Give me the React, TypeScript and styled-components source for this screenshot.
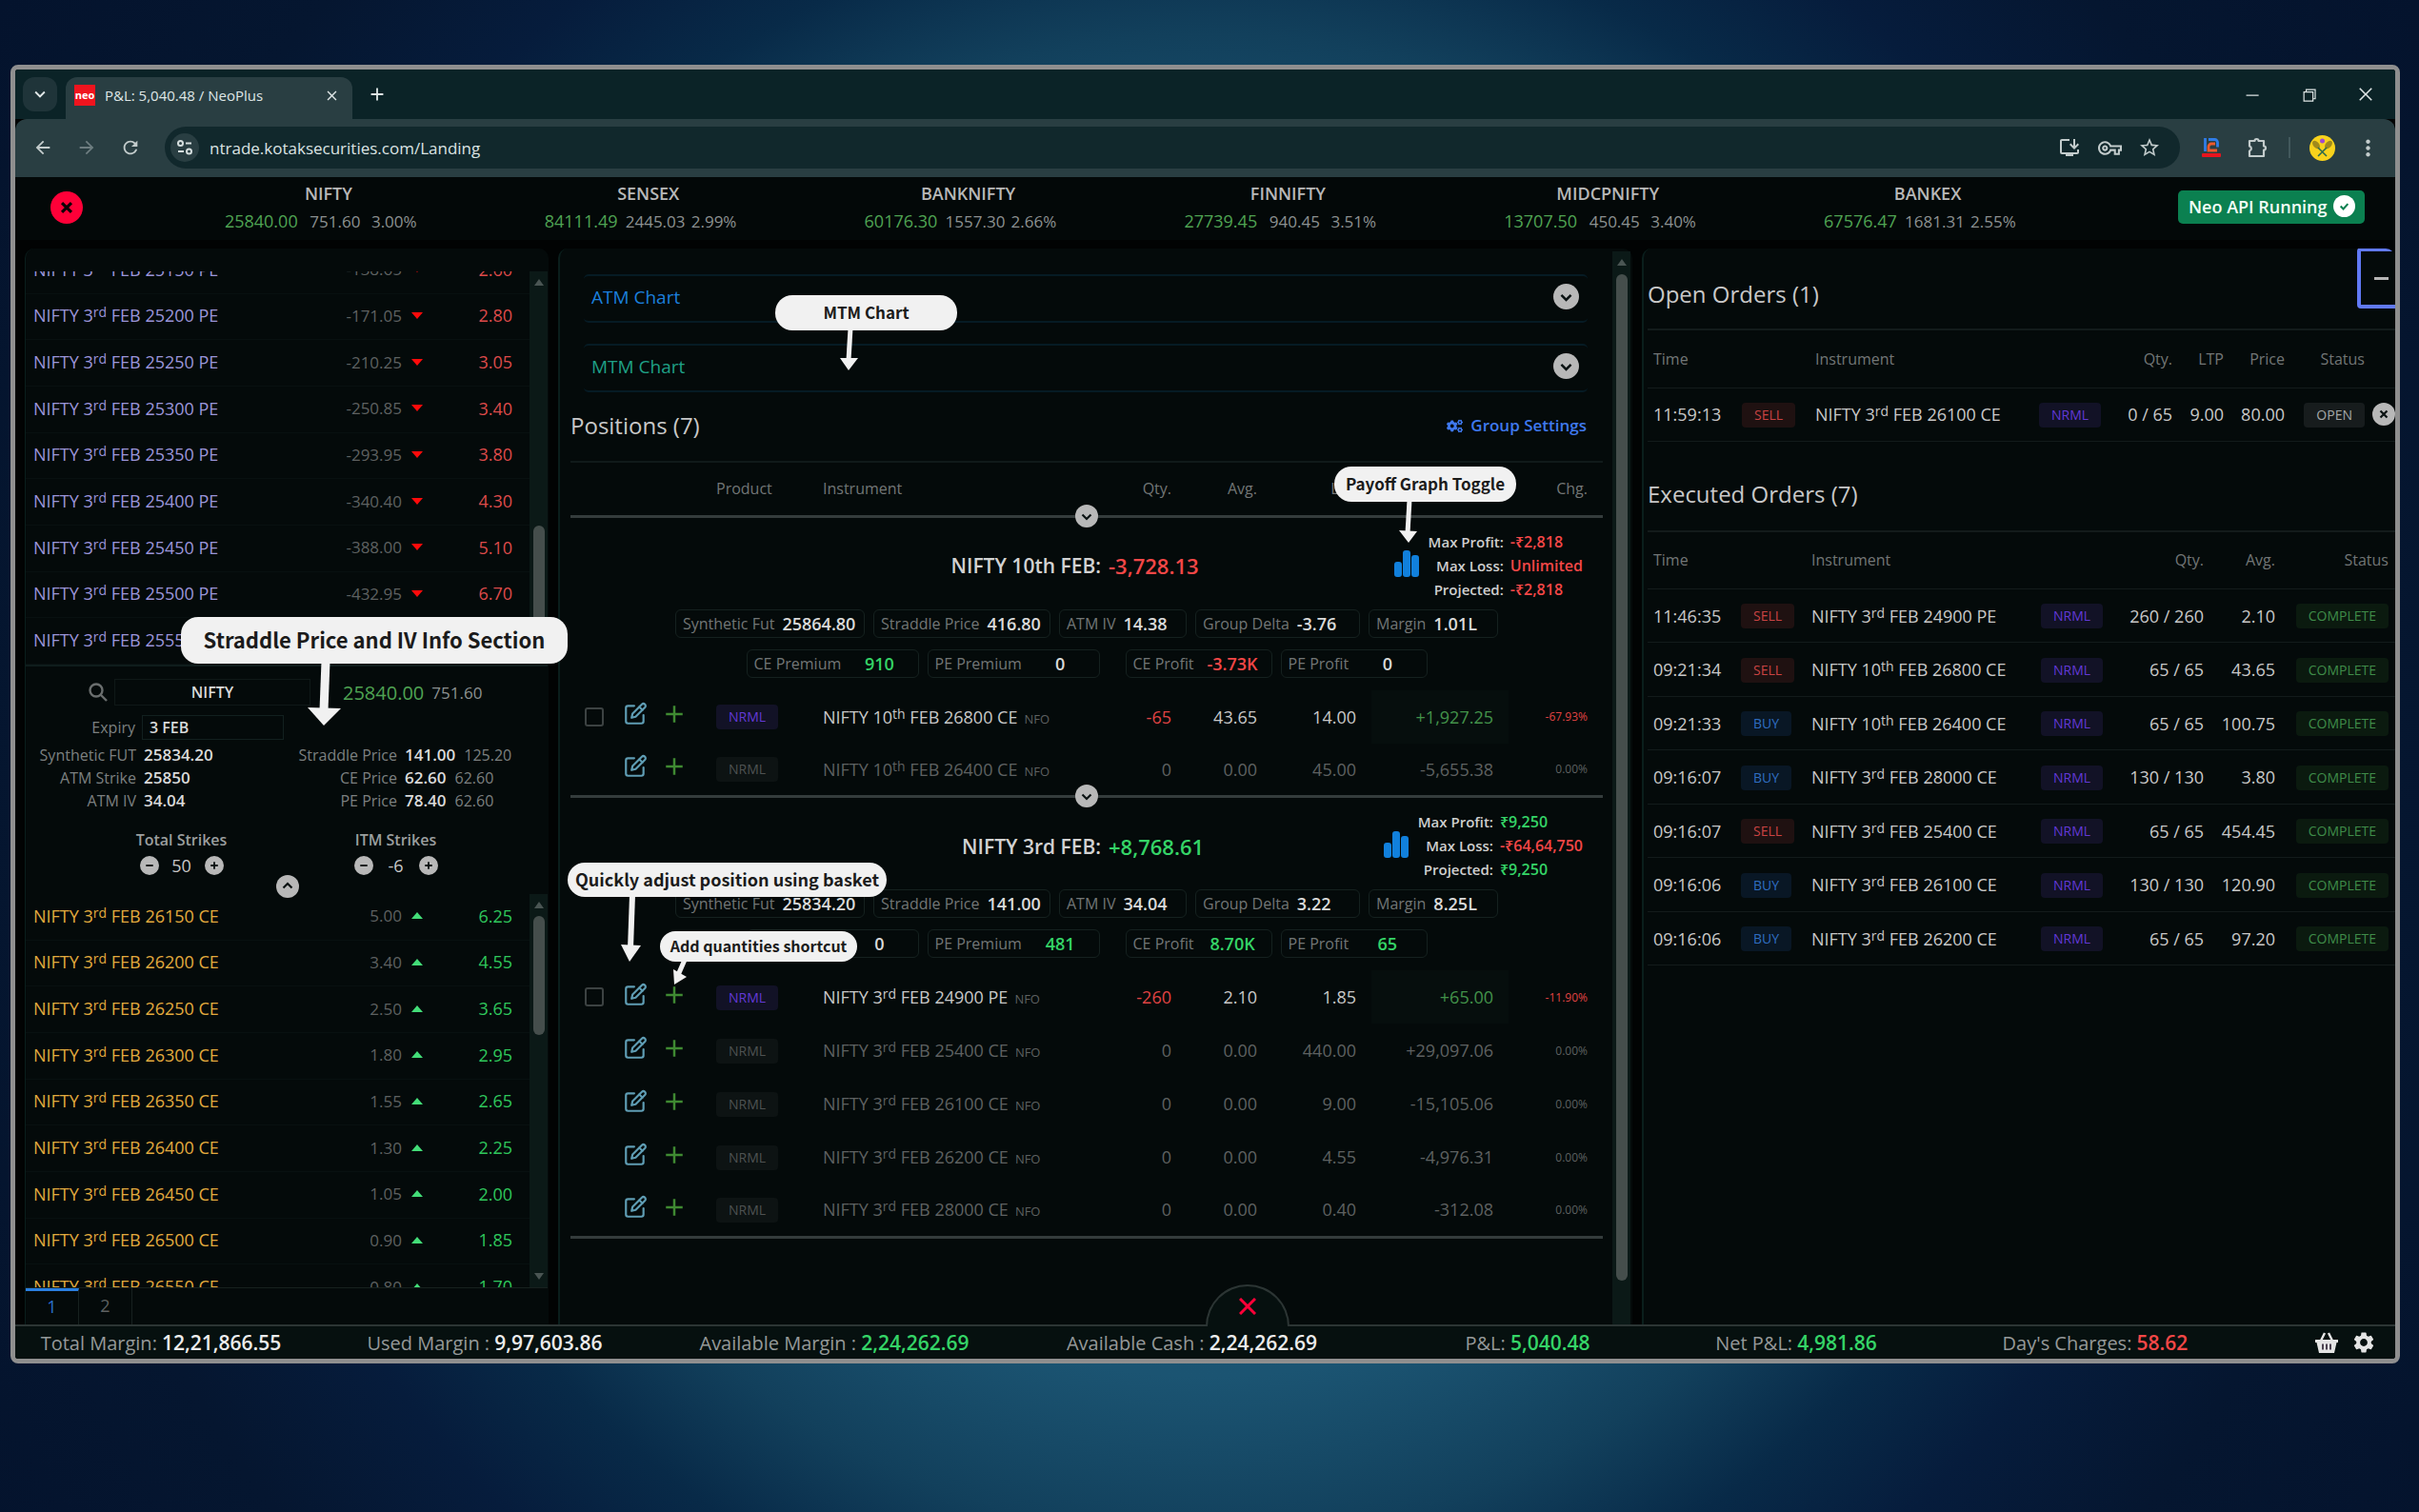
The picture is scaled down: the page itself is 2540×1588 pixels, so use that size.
import React from "react";
import styled, { createGlobalStyle } from "styled-components";
import {
  MdArrowBack,
  MdArrowForward,
  MdRefresh,
  MdInstallDesktop,
  MdOutlineVpnKey,
  MdStarOutline,
  MdMoreVert,
  MdClose,
  MdAdd,
  MdKeyboardArrowDown,
  MdSettings,
} from "react-icons/md";
import { VscChromeClose, VscChromeMinimize, VscChromeRestore } from "react-icons/vsc";
import { FaCogs } from "react-icons/fa";

const c = {
  panel: "#040a0a",
  line: "#101a1a",
  rule: "#343c3c",
  text: "#c8c8c8",
  bright: "#dadada",
  label: "#727676",
  dim: "#5e6161",
  green: "#35d467",
  mutedGreen: "#4fa353",
  red: "#f44747",
  chip: "#15211f",
};

const Global = createGlobalStyle`
  * { box-sizing: border-box; }
  body { margin: 0; background: #04132d; }
  body, button, input, select { font-family: "Open Sans", "Noto Sans", sans-serif; }
  button { border: 0; padding: 0; background: none; color: inherit; cursor: pointer; }
  h1, h2, h3 { margin: 0; font-weight: 400; }
  sup { font-size: 14px; line-height: 0; vertical-align: 5px; }
`;

const Desktop = styled.div`
  position: relative;
  display: flex;
  min-height: 100vh;
  padding: 68px 20px 156px 11px;
  background: radial-gradient(circle at 50% 52%, #20607f 0, #1b5472 620px, #12405c 790px, #082a48 920px, #061c3c 1060px, #051630 1240px, #04132d 100%);
`;

const Window = styled.main`
  flex: 1;
  min-width: 0;
  display: flex;
  flex-direction: column;
  overflow: hidden;
  border: 5px solid #8f8f8f;
  border-radius: 8px;
  background: #010303;
`;

/* browser chrome */

const TabStrip = styled.div`
  display: flex;
  align-items: flex-start;
  height: 52px;
  padding: 8px 8px 0;
  background: #0b2327;
  color: #dfe6e6;
`;

const TabSearch = styled.button`
  display: grid;
  place-items: center;
  width: 36px;
  height: 36px;
  border-radius: 12px;
  background: #1f3439;
  font-size: 22px;
`;

const Tab = styled.div`
  display: flex;
  align-items: center;
  width: 301px;
  height: 44px;
  margin-left: 9px;
  padding: 0 12px 6px 9px;
  border-radius: 12px 12px 0 0;
  background: #293e42;
`;

const Favicon = styled.span`
  width: 22px;
  height: 22px;
  background: #f0141e;
  color: #fff;
  font-size: 11px;
  font-weight: 700;
  line-height: 22px;
  text-align: center;
`;

const TabTitle = styled.span`
  flex: 1;
  margin-left: 10px;
  font-size: 15px;
`;

const IconButton = styled.button<{ $size?: number }>`
  display: grid;
  place-items: center;
  width: 36px;
  height: 36px;
  font-size: ${(p) => p.$size ?? 22}px;
`;

const TabClose = styled(IconButton)`
  width: 20px;
`;

const NewTab = styled(IconButton)`
  margin-left: 8px;
`;

const WindowControls = styled.div`
  display: flex;
  gap: 24px;
  margin-left: auto;
  padding-right: 5px;
`;

const Toolbar = styled.div`
  display: flex;
  align-items: center;
  height: 61px;
  padding: 0 11px 1px;
  border-radius: 12px 12px 0 0;
  background: #293e42;
  color: #c3cccc;
`;

const NavButtons = styled.div`
  display: flex;
  gap: 10px;
  width: 146px;
`;

const Omnibox = styled.div`
  flex: 1;
  display: flex;
  align-items: center;
  height: 44px;
  padding: 0 14px 0 6px;
  border-radius: 22px;
  background: #11282c;
`;

const SiteInfo = styled.button`
  display: grid;
  place-items: center;
  width: 30px;
  height: 30px;
  border-radius: 50%;
  background: #293e42;
`;

const Url = styled.input`
  flex: 1;
  margin-left: 9px;
  border: 0;
  outline: 0;
  background: none;
  color: #dbe3e3;
  font-size: 17px;
`;

const OmniIcons = styled.div`
  display: flex;
  gap: 6px;
`;

const Extensions = styled.div`
  display: flex;
  align-items: center;
  padding-left: 15px;
  gap: 12px;
`;

const Divider = styled.span`
  width: 2px;
  height: 22px;
  margin: 0 3px;
  background: #42585c;
`;

/* ticker */

const Ticker = styled.header`
  display: flex;
  align-items: center;
  height: 66px;
  padding-bottom: 3px;
  background: #030808;
`;

const TickerStart = styled.div`
  width: 161px;
  padding-left: 37px;
`;

const CloseAll = styled.button`
  display: block;
`;

const Indices = styled.div`
  flex: 1;
  display: grid;
  grid-template-columns: repeat(6, 1fr);
  padding-bottom: 3px;
`;

const Index = styled.div`
  display: flex;
  flex-direction: column;
  align-items: center;
`;

const IndexName = styled.span`
  color: #b8b8b8;
  font-size: 18px;
  font-weight: 600;
  line-height: 32px;
`;

const IndexFigures = styled.div`
  display: grid;
  grid-template-columns: 78px 62px 64px;
  column-gap: 7px;
  align-items: baseline;
  color: #8c9191;
  font-size: 17px;
  line-height: 27px;
  span:nth-child(2) { text-align: center; }
`;

const IndexPrice = styled.b`
  color: ${c.mutedGreen};
  font-size: 18px;
  font-weight: 400;
`;

const TickerEnd = styled.div`
  width: 323px;
  padding-left: 95px;
`;

const ApiButton = styled.button`
  display: flex;
  align-items: center;
  justify-content: space-between;
  width: 196px;
  height: 35px;
  padding: 0 10px 2px 11px;
  border-radius: 5px;
  background: #0b8050;
  color: #f4fff8;
  font-size: 18px;
  font-weight: 600;
`;

/* layout */

const Body = styled.div`
  flex: 1;
  display: grid;
  grid-template-columns: minmax(0, 550fr) minmax(0, 1128fr) minmax(0, 791fr);
  grid-template-rows: minmax(0, 1fr);
  column-gap: 10px;
  padding: 9px 0 0 10px;
  min-height: 0;
`;

const Panel = styled.section`
  position: relative;
  display: flex;
  min-width: 0;
  border-left: 2px solid #0a1e1c;
  border-radius: 10px 10px 0 0;
  background: ${c.panel};
`;

const LeftPanel = styled(Panel)`
  flex-direction: column;
  border-left-width: 1px;
  padding: 24px 1px 0 0;
`;

const Watch = styled.div`
  flex: 1 1 0;
  display: flex;
  min-height: 0;
  overflow: hidden;
`;

const WatchRows = styled.div<{ $end?: boolean }>`
  flex: 1;
  display: flex;
  flex-direction: column;
  justify-content: ${(p) => (p.$end ? "flex-end" : "flex-start")};
  overflow: hidden;
`;

const WatchGrid = styled.div`
  flex: none;
  display: grid;
  grid-template-rows: repeat(9, 1fr);
  height: 438px;
`;

const WatchRow = styled.div<{ $call?: boolean }>`
  display: grid;
  grid-template-columns: 1fr 100px 32px 84px;
  align-items: center;
  padding: 0 18px 2px 8px;
  border-bottom: 1px solid #081010;
  color: ${(p) => (p.$call ? "#e2aa3e" : "#9b95da")};
  font-size: 18px;
`;

const Change = styled.span`
  color: ${c.dim};
  font-size: 17px;
  text-align: right;
`;

const Caret = styled.i<{ $up?: boolean }>`
  justify-self: center;
  border: 6px solid transparent;
  border-${(p) => (p.$up ? "bottom" : "top")}: 7px solid ${(p) => (p.$up ? "#43dd78" : "#ff0a0a")};
  border-${(p) => (p.$up ? "top" : "bottom")}: 0;
`;

const Last = styled.span<{ $up?: boolean }>`
  color: ${(p) => (p.$up ? "#2fc75c" : "#dd4a4a")};
  text-align: right;
`;

const Track = styled.div`
  display: flex;
  flex-direction: column;
  align-items: center;
  width: 19px;
  padding: 8px 0;
  background: #0b1917;
`;

const TrackArrow = styled.i<{ $down?: boolean }>`
  border: 5px solid transparent;
  border-${(p) => (p.$down ? "top" : "bottom")}: 7px solid #4a5553;
  border-${(p) => (p.$down ? "bottom" : "top")}: 0;
`;

const Thumb = styled.div<{ $before: number; $size: number }>`
  flex: ${(p) => p.$size} 1 0;
  width: 12px;
  margin-top: ${(p) => p.$before}px;
  border-radius: 6px;
  background: #454e4c;
`;

const TrackRest = styled.div<{ $size: number }>`
  flex: ${(p) => p.$size} 1 0;
`;

const Info = styled.div`
  position: relative;
  height: 241px;
  padding-top: 12px;
  border-top: 2px solid #0f1d1c;
  color: #7c8080;
  font-size: 16px;
`;

const InfoSearch = styled.div`
  display: flex;
  align-items: center;
  height: 30px;
  padding-left: 66px;
`;

const Symbol = styled.input`
  width: 206px;
  height: 28px;
  margin: 0 34px 0 7px;
  border: 1px solid #0f1817;
  background: transparent;
  color: ${c.bright};
  font-size: 16px;
  font-weight: 600;
  text-align: center;
`;

const Spot = styled.span`
  color: ${c.mutedGreen};
  font-size: 20px;
`;

const SpotChange = styled.span`
  margin-left: 8px;
  color: #8c9191;
  font-size: 17px;
`;

const InfoExpiry = styled.label`
  display: flex;
  align-items: center;
  justify-content: flex-end;
  width: 271px;
  height: 26px;
  margin: 9px 0 4px;
  gap: 7px;
`;

const Expiry = styled.select`
  appearance: none;
  width: 149px;
  height: 26px;
  padding: 0 7px;
  border: 1px solid #12201f;
  border-radius: 0;
  background: transparent;
  color: ${c.bright};
  font-size: 16px;
  font-weight: 600;
`;

const InfoGrid = styled.div`
  display: grid;
  grid-template-columns: 116px 148px 110px 1fr;
  column-gap: 8px;
  line-height: 24px;
  span:nth-child(odd) { text-align: right; }
  b { margin-right: 9px; color: ${c.bright}; font-size: 17px; font-weight: 600; }
`;

const Steppers = styled.div`
  display: grid;
  grid-template-columns: 225px 225px;
  margin: 15px 0 0 51px;
`;

const Stepper = styled.div`
  display: flex;
  flex-direction: column;
  align-items: center;
  color: #9b9f9f;
  font-weight: 600;
  line-height: 28px;
`;

const StepRow = styled.div`
  display: grid;
  grid-template-columns: 20px 48px 20px;
  align-items: center;
  color: ${c.text};
  font-size: 18px;
  font-weight: 400;
  line-height: 26px;
  text-align: center;
`;

const InfoToggle = styled.button`
  position: absolute;
  left: 263px;
  top: 219px;
`;

const RoundSvg = styled.svg`
  display: block;
`;

const Pages = styled.nav`
  display: flex;
  height: 39px;
  border-top: 1px solid #17211f;
`;

const PageTab = styled.button<{ $on?: boolean }>`
  width: 56px;
  padding-bottom: 3px;
  border-top: ${(p) => (p.$on ? "3px solid #2a7fe0" : "0")};
  border-right: 1px solid #17211f;
  color: ${(p) => (p.$on ? "#2a6fd0" : c.dim)};
  font-size: 18px;
`;

/* positions */

const Center = styled.div`
  flex: 1;
  min-width: 0;
  padding: 27px 10px 0 11px;
`;

const Accordion = styled.button<{ $tone: string }>`
  display: flex;
  align-items: center;
  justify-content: space-between;
  width: calc(100% - 30px);
  height: 51px;
  margin: 0 16px 22px 14px;
  padding: 0 9px 4px 8px;
  border: solid #061b24;
  border-width: 2px 0;
  border-radius: 5px;
  color: ${(p) => p.$tone};
  font-size: 19px;
`;

const TitleBar = styled.div`
  display: flex;
  align-items: center;
  justify-content: space-between;
  height: 50px;
  padding: 0 17px 24px 0;
`;

const Title = styled.h2`
  color: ${c.text};
  font-size: 24px;
  line-height: 24px;
`;

const SettingsLink = styled.a`
  display: flex;
  align-items: center;
  gap: 8px;
  color: #3f79ee;
  font-size: 17px;
  font-weight: 600;
  line-height: 20px;
  text-decoration: none;
`;

const Table = styled.table`
  width: 100%;
  border-collapse: collapse;
  table-layout: fixed;
  color: ${c.text};
  font-size: 18px;
`;

const Th = styled.th<{ $right?: boolean; $pad?: number }>`
  height: 57px;
  padding: 0 16px 0 ${(p) => p.$pad ?? 0}px;
  border-top: 2px solid ${c.line};
  color: ${c.label};
  font-size: 16px;
  font-weight: 400;
  text-align: ${(p) => (p.$right ? "right" : "left")};
`;

const Td = styled.td<{ $right?: boolean; $pad?: number; $tone?: string; $hl?: boolean }>`
  height: 56px;
  padding: 0 ${(p) => (p.$right ? 16 : 0)}px 0 ${(p) => p.$pad ?? 0}px;
  background: ${(p) => (p.$hl ? "#060e0d" : "transparent")};
  color: ${(p) => p.$tone ?? "inherit"};
  text-align: ${(p) => (p.$right ? "right" : "left")};
  white-space: nowrap;
`;

const PctTd = styled(Td)`
  font-size: 12px;
`;

const IconTd = styled.td`
  padding: 0;
  text-align: center;
  svg { display: block; margin: auto; }
`;

const Check = styled.input`
  appearance: none;
  display: block;
  width: 20px;
  height: 20px;
  margin: 0 auto;
  border: 2px solid #3c4242;
  border-radius: 3px;
`;

const Exchange = styled.small`
  margin-left: 7px;
  color: ${c.dim};
  font-size: 13px;
`;

const tones: Record<string, [string, string]> = {
  NRML: ["#121226", "#6239d6"],
  OFF: ["#0d1313", "#4e5252"],
  SELL: ["#1f1111", "#c94343"],
  BUY: ["#091725", "#2f6ec2"],
  OPEN: ["#171c1d", "#a5a9a9"],
  COMPLETE: ["#0b1a0f", "#3f8c49"],
};

const Badge = styled.span<{ $tone: string }>`
  display: inline-block;
  padding: 0 13px;
  border-radius: 4px;
  background: ${(p) => tones[p.$tone][0]};
  color: ${(p) => tones[p.$tone][1]};
  font-size: 14px;
  line-height: 26px;
  vertical-align: middle;
`;

const GroupCell = styled.td`
  padding: 0;
  border-top: 3px solid ${c.rule};
`;

const Group = styled.div`
  position: relative;
  height: 181px;
`;

const GroupToggle = styled.button`
  position: absolute;
  left: 50%;
  top: -14px;
  margin-left: -12px;
`;

const GroupHead = styled.div`
  display: grid;
  grid-template-columns: 557fr 519fr;
  column-gap: 8px;
  align-items: center;
  height: 96px;
  padding-top: 5px;
  font-size: 22px;
  font-weight: 600;
`;

const GroupName = styled.h3`
  color: #d2d2d2;
  font-size: 21px;
  font-weight: 600;
  text-align: right;
`;

const GroupSide = styled.div<{ $tone: string }>`
  display: flex;
  align-items: center;
  justify-content: space-between;
  padding-right: 21px;
  color: ${(p) => p.$tone};
`;

const Payoff = styled.div`
  display: flex;
  align-items: center;
  gap: 10px;
`;

const Stats = styled.dl`
  display: grid;
  grid-template-columns: auto auto;
  column-gap: 7px;
  margin: 0;
  color: #cfcfcf;
  font-size: 16px;
  font-weight: 600;
  line-height: 25px;
  dt { font-size: 15px; text-align: right; }
  dd { margin: 0; }
`;

const Tone = styled.dd<{ $tone: string }>`
  color: ${(p) => p.$tone};
`;

const Chips = styled.div`
  display: flex;
  justify-content: center;
  gap: 9px;
  margin-bottom: 12px;
`;

const Chip = styled.div<{ $w: number; $gap?: boolean }>`
  display: flex;
  align-items: center;
  gap: 8px;
  width: ${(p) => p.$w}px;
  height: 30px;
  margin-left: ${(p) => (p.$gap ? 18 : 0)}px;
  padding: 0 8px 0 7px;
  border: 1px solid ${c.chip};
  border-radius: 6px;
  color: ${c.label};
  font-size: 16px;
  line-height: 26px;
  white-space: nowrap;
`;

const ChipValue = styled.b<{ $tone?: string; $center?: boolean }>`
  flex: 1;
  color: ${(p) => p.$tone ?? c.bright};
  font-size: 18px;
  font-weight: 600;
  text-align: ${(p) => (p.$center ? "center" : "left")};
`;

const CenterTrack = styled(Track)`
  margin: 3px 2px 0 0;
`;

/* orders */

const RightPanel = styled(Panel)`
  flex-direction: column;
  overflow: hidden;
  padding-left: 4px;
`;

const OrdersTitle = styled.h2<{ $first?: boolean }>`
  height: ${(p) => (p.$first ? 84 : 93)}px;
  padding-top: ${(p) => (p.$first ? 10 : 17)}px;
  color: ${c.text};
  font-size: 24px;
  line-height: 76px;
`;

const OrderTable = styled(Table)`
  tr { border-bottom: 1px solid #131b1b; }
  thead { border-top: 2px solid #131b1b; }
  tbody tr:nth-child(even) { height: 57px; }
`;

const OTh = styled(Th)`
  height: 61px;
  padding: 0;
  padding-left: ${(p) => p.$pad ?? 0}px;
  border-top: 0;
`;

const OTd = styled(Td)`
  padding-right: 0;
`;

const Cancel = styled.button`
  display: block;
  margin-left: auto;
`;

const Collapse = styled.button`
  position: absolute;
  top: -1px;
  right: -10px;
  width: 50px;
  height: 64px;
  padding-left: 14px;
  border: 4px solid #6179f5;
  border-radius: 4px;
  background: #040a0a;
  &::before { content: ""; display: block; width: 15px; height: 3px; background: #b5b5b5; }
`;

/* footer */

const Footer = styled.footer`
  position: relative;
  display: grid;
  grid-template-columns: 306fr 374fr 360fr 391fr 314fr 250fr 378fr 126fr;
  align-items: center;
  height: 36px;
  border-top: 2px solid #2c3534;
  background: #06100f;
  color: #959999;
  font-size: 20px;
  line-height: 30px;
  text-align: center;
  b { font-size: 21px; font-weight: 600; }
`;

const Total = styled.b<{ $tone: string }>`
  color: ${(p) => p.$tone};
`;

const FooterIcons = styled.div`
  display: flex;
  align-items: center;
  gap: 14px;
  justify-content: flex-end;
  padding-right: 20px;
  color: #e4e4e4;
`;

const Dome = styled.button`
  position: absolute;
  left: 1250px;
  bottom: 34px;
  display: grid;
  place-items: center;
  width: 88px;
  height: 44px;
  border: 2px solid #2c3534;
  border-bottom: 0;
  border-radius: 44px 44px 0 0;
  background: #06100f;
`;

/* annotations */

const Callout = styled.div<{ $x: number; $y: number; $w: number; $h: number; $size: number; $r: number }>`
  position: absolute;
  left: ${(p) => p.$x}px;
  top: ${(p) => p.$y}px;
  width: ${(p) => p.$w}px;
  height: ${(p) => p.$h}px;
  border-radius: ${(p) => p.$r}px;
  background: #f1f1f1;
  color: #1b1b1b;
  font-family: "Noto Sans CJK SC", sans-serif;
  font-size: ${(p) => p.$size}px;
  font-weight: 700;
  line-height: ${(p) => p.$h - 2}px;
  text-align: center;
  white-space: nowrap;
`;

const Arrows = styled.svg`
  position: absolute;
  left: 0;
  top: 0;
  width: 100%;
  height: 100%;
  pointer-events: none;
`;

type Glyph = "down" | "up" | "minus" | "plus" | "x" | "check";
const glyphs: Record<Glyph, string> = {
  down: "M7.5 10.5 12 15l4.5-4.5",
  up: "M7.5 13.5 12 9l4.5 4.5",
  minus: "M7.5 12h9",
  plus: "M7.5 12h9M12 7.5v9",
  x: "m8.5 8.5 7 7M15.5 8.5l-7 7",
  check: "m8 12 3 3 5-5.5",
};

function Round({ glyph, size, fill = "#b8b8b8", ink = "#0b1212" }: { glyph: Glyph; size: number; fill?: string; ink?: string }) {
  return (
    <RoundSvg width={size} height={size} viewBox="0 0 24 24" aria-hidden="true">
      <circle cx="12" cy="12" r="12" fill={fill} />
      <path d={glyphs[glyph]} fill="none" stroke={ink} strokeWidth="2.2" />
    </RoundSvg>
  );
}

function EditIcon() {
  return (
    <svg width="26" height="26" viewBox="0 0 24 24" fill="none" stroke="#5f9db4" strokeWidth="2" strokeLinecap="round" strokeLinejoin="round" aria-hidden="true">
      <path d="M11 4H5a2 2 0 0 0-2 2v13a2 2 0 0 0 2 2h13a2 2 0 0 0 2-2v-6" />
      <path d="M18.400 2.600a2.100 2.100 0 0 1 3 3l-9 9L8.500 15.500l.9-3.900z" />
      <path d="m16 5 3 3" />
    </svg>
  );
}

function BasketIcon() {
  return (
    <svg width="24" height="22" viewBox="0 0 24 22" fill="none" aria-hidden="true">
      <path d="M6 9 10 1M18 9 14 1" stroke="#e4e4e4" strokeWidth="2.4" />
      <path d="M0 8h24v3h-1.5l-2.5 11h-16L1.500 11H0z" fill="#e4e4e4" />
      <path d="M8 12.500v6M12 12.500v6M16 12.500v6" stroke="#3a3040" strokeWidth="1.8" />
    </svg>
  );
}

const ord = (s: string) => {
  const m = s.match(/^(.*?\d+)(rd|th)( .*)$/);
  return m ? (
    <>
      {m[1]}
      <sup>{m[2]}</sup>
      {m[3]}
    </>
  ) : (
    s
  );
};

const indices = [
  ["NIFTY", "25840.00", "751.60", "3.00%"],
  ["SENSEX", "84111.49", "2445.03", "2.99%"],
  ["BANKNIFTY", "60176.30", "1557.30", "2.66%"],
  ["FINNIFTY", "27739.45", "940.45", "3.51%"],
  ["MIDCPNIFTY", "13707.50", "450.45", "3.40%"],
  ["BANKEX", "67576.47", "1681.31", "2.55%"],
];

const puts = [
  ["25150", "-138.65", "2.60"],
  ["25200", "-171.05", "2.80"],
  ["25250", "-210.25", "3.05"],
  ["25300", "-250.85", "3.40"],
  ["25350", "-293.95", "3.80"],
  ["25400", "-340.40", "4.30"],
  ["25450", "-388.00", "5.10"],
  ["25500", "-432.95", "6.70"],
  ["25550", "", ""],
];

const calls = [
  ["26150", "5.00", "6.25"],
  ["26200", "3.40", "4.55"],
  ["26250", "2.50", "3.65"],
  ["26300", "1.80", "2.95"],
  ["26350", "1.55", "2.65"],
  ["26400", "1.30", "2.25"],
  ["26450", "1.05", "2.00"],
  ["26500", "0.90", "1.85"],
  ["26550", "0.80", "1.70"],
];

const groups = [
  {
    name: "NIFTY 10th FEB:",
    pl: "-3,728.13",
    stats: ["-₹2,818", "Unlimited", "-₹2,818"],
    market: ["25864.80", "416.80", "14.38", "-3.76", "1.01L"],
    legs: ["910", "0", "-3.73K", "0"],
    rows: [
      ["NIFTY 10th FEB 26800 CE", "-65", "43.65", "14.00", "+1,927.25", "-67.93%"],
      ["NIFTY 10th FEB 26400 CE", "0", "0.00", "45.00", "-5,655.38", "0.00%"],
    ],
  },
  {
    name: "NIFTY 3rd FEB:",
    pl: "+8,768.61",
    stats: ["₹9,250", "-₹64,64,750", "₹9,250"],
    market: ["25834.20", "141.00", "34.04", "3.22", "8.25L"],
    legs: ["0", "481", "8.70K", "65"],
    rows: [
      ["NIFTY 3rd FEB 24900 PE", "-260", "2.10", "1.85", "+65.00", "-11.90%"],
      ["NIFTY 3rd FEB 25400 CE", "0", "0.00", "440.00", "+29,097.06", "0.00%"],
      ["NIFTY 3rd FEB 26100 CE", "0", "0.00", "9.00", "-15,105.06", "0.00%"],
      ["NIFTY 3rd FEB 26200 CE", "0", "0.00", "4.55", "-4,976.31", "0.00%"],
      ["NIFTY 3rd FEB 28000 CE", "0", "0.00", "0.40", "-312.08", "0.00%"],
    ],
  },
];

const marketChips: [string, number][] = [
  ["Synthetic Fut", 199],
  ["Straddle Price", 186],
  ["ATM IV", 134],
  ["Group Delta", 173],
  ["Margin", 136],
];

const legChips: [string, number][] = [
  ["CE Premium", 181],
  ["PE Premium", 181],
  ["CE Profit", 154],
  ["PE Profit", 154],
];

const executed = [
  ["11:46:35", "SELL", "NIFTY 3rd FEB 24900 PE", "260 / 260", "2.10"],
  ["09:21:34", "SELL", "NIFTY 10th FEB 26800 CE", "65 / 65", "43.65"],
  ["09:21:33", "BUY", "NIFTY 10th FEB 26400 CE", "65 / 65", "100.75"],
  ["09:16:07", "BUY", "NIFTY 3rd FEB 28000 CE", "130 / 130", "3.80"],
  ["09:16:07", "SELL", "NIFTY 3rd FEB 25400 CE", "65 / 65", "454.45"],
  ["09:16:06", "BUY", "NIFTY 3rd FEB 26100 CE", "130 / 130", "120.90"],
  ["09:16:06", "BUY", "NIFTY 3rd FEB 26200 CE", "65 / 65", "97.20"],
];

const footer: [string, string, string][] = [
  ["Total Margin", "12,21,866.55", "#ececec"],
  ["Used Margin ", "9,97,603.86", "#ececec"],
  ["Available Margin ", "2,24,262.69", c.green],
  ["Available Cash ", "2,24,262.69", "#ececec"],
  ["P&L", "5,040.48", c.green],
  ["Net P&L", "4,981.86", c.green],
  ["Day's Charges", "58.62", c.red],
];

const signTone = (v: string) => (v === "0" ? c.bright : v.startsWith("-") || v === "Unlimited" ? c.red : c.green);

function WatchList({ rows, call }: { rows: string[][]; call?: boolean }) {
  return (
    <WatchRows $end={!call}>
      <WatchGrid>
        {rows.map(([strike, chg, last]) => (
          <WatchRow key={strike} $call={call}>
            <span>{ord(`NIFTY 3rd FEB ${strike} ${call ? "CE" : "PE"}`)}</span>
            <Change>{chg}</Change>
            <Caret $up={call} />
            <Last $up={call}>{last}</Last>
          </WatchRow>
        ))}
      </WatchGrid>
    </WatchRows>
  );
}

function StepperField({ label, value }: { label: string; value: string }) {
  return (
    <Stepper>
      <span>{label}</span>
      <StepRow>
        <button aria-label={`Decrease ${label}`}><Round glyph="minus" size={20} /></button>
        <span>{value}</span>
        <button aria-label={`Increase ${label}`}><Round glyph="plus" size={20} /></button>
      </StepRow>
    </Stepper>
  );
}

function Chrome() {
  return (
    <>
      <TabStrip>
        <TabSearch aria-label="Search tabs"><MdKeyboardArrowDown /></TabSearch>
        <Tab>
          <Favicon>neo</Favicon>
          <TabTitle>P&amp;L: 5,040.48 / NeoPlus</TabTitle>
          <TabClose $size={17} aria-label="Close tab"><MdClose /></TabClose>
        </Tab>
        <NewTab $size={22} aria-label="New tab"><MdAdd /></NewTab>
        <WindowControls>
          <IconButton $size={19} aria-label="Minimize"><VscChromeMinimize /></IconButton>
          <IconButton $size={19} aria-label="Restore"><VscChromeRestore /></IconButton>
          <IconButton $size={20} aria-label="Close"><VscChromeClose /></IconButton>
        </WindowControls>
      </TabStrip>
      <Toolbar>
        <NavButtons>
          <IconButton aria-label="Back"><MdArrowBack /></IconButton>
          <IconButton aria-label="Forward"><MdArrowForward color="#6d7d80" /></IconButton>
          <IconButton aria-label="Reload"><MdRefresh /></IconButton>
        </NavButtons>
        <Omnibox>
          <SiteInfo aria-label="Site information">
            <svg width="18" height="18" viewBox="0 0 18 18" fill="none" stroke="#d5dede" strokeWidth="2">
              <circle cx="4.500" cy="4.500" r="2.500" />
              <path d="M10 4.500h6M2 13h6" />
              <circle cx="13.500" cy="13" r="2.500" />
            </svg>
          </SiteInfo>
          <Url aria-label="Address" defaultValue="ntrade.kotaksecurities.com/Landing" />
          <OmniIcons>
            <IconButton $size={24} aria-label="Install app"><MdInstallDesktop /></IconButton>
            <IconButton $size={25} aria-label="Passwords"><MdOutlineVpnKey /></IconButton>
            <IconButton $size={24} aria-label="Bookmark"><MdStarOutline /></IconButton>
          </OmniIcons>
        </Omnibox>
        <Extensions>
          <IconButton aria-label="Extension">
            <svg width="22" height="22" viewBox="0 0 22 22" fill="none">
              <path d="M4.500 1v14" stroke="#2f7de8" strokeWidth="2.800" />
              <path d="M8 2.500h6.500a3 3 0 0 1 3 3v5" stroke="#2f7de8" strokeWidth="2.800" />
              <path d="M15 7h-4a3 3 0 0 0-3 3v4h9" stroke="#f0592b" strokeWidth="2.800" />
              <rect x="1" y="17" width="20" height="4" rx="1" fill="#e8141e" />
            </svg>
          </IconButton>
          <IconButton aria-label="Extensions">
            <svg width="24" height="24" viewBox="0 0 24 24" fill="none" stroke="#c3cccc" strokeWidth="2.200" strokeLinejoin="round">
              <path d="M4 5h5.500a2 2 0 0 1 4 0H19v5.500a2 2 0 0 1 0 4V21H4v-5.500a2.600 2.600 0 0 0 0-5z" />
            </svg>
          </IconButton>
          <Divider />
          <IconButton aria-label="Profile">
            <svg width="27" height="27" viewBox="0 0 27 27">
              <circle cx="13.500" cy="13.500" r="13.500" fill="#f8d21c" />
              <circle cx="13.500" cy="6" r="2.500" fill="#a04ad0" />
              <ellipse cx="7" cy="10" rx="3" ry="5" transform="rotate(-40 7 10)" fill="#a08a1c" />
              <ellipse cx="20" cy="10" rx="3" ry="5" transform="rotate(40 20 10)" fill="#a08a1c" />
              <path d="m9 13 9 9M18 13l-9 9" stroke="#2e6a4c" strokeWidth="1.600" />
            </svg>
          </IconButton>
          <IconButton $size={27} aria-label="Menu"><MdMoreVert /></IconButton>
        </Extensions>
      </Toolbar>
    </>
  );
}

function Positions() {
  return (
    <Center>
      <Accordion $tone="#1b7fdc"><span>ATM Chart</span><Round glyph="down" size={27} /></Accordion>
      <Accordion $tone="#1fa086"><span>MTM Chart</span><Round glyph="down" size={27} /></Accordion>
      <TitleBar>
        <Title>Positions (7)</Title>
        <SettingsLink href="#settings"><FaCogs size={17} />Group Settings</SettingsLink>
      </TitleBar>
      <Table>
        <colgroup>
          <col style={{ width: 49 }} />
          <col style={{ width: 37 }} />
          <col style={{ width: 45 }} />
          <col style={{ width: 112 }} />
          <col />
          <col style={{ width: 96 }} />
          <col style={{ width: 90 }} />
          <col style={{ width: 104 }} />
          <col style={{ width: 144 }} />
          <col style={{ width: 99 }} />
        </colgroup>
        <thead>
          <tr>
            <Th /><Th /><Th />
            <Th $pad={22}>Product</Th>
            <Th $pad={22}>Instrument</Th>
            <Th $right>Qty.</Th>
            <Th $right>Avg.</Th>
            <Th $right>LTP</Th>
            <Th $right>P&amp;L</Th>
            <Th $right>Chg.</Th>
          </tr>
        </thead>
        {groups.map((g) => (
          <tbody key={g.name}>
            <tr>
              <GroupCell colSpan={10}>
                <Group>
                  <GroupToggle aria-label={`Collapse ${g.name}`}><Round glyph="down" size={24} /></GroupToggle>
                  <GroupHead>
                    <GroupName>{g.name}</GroupName>
                    <GroupSide $tone={signTone(g.pl)}>
                      <span>{g.pl}</span>
                      <Payoff>
                        <button aria-label="Payoff graph">
                          <svg width="26" height="28" viewBox="0 0 26 28" fill="#1180dc">
                            <rect x="0" y="12" width="8" height="16" rx="3" />
                            <rect x="9" y="0" width="8" height="28" rx="3" />
                            <rect x="18" y="5" width="8" height="23" rx="3" />
                          </svg>
                        </button>
                        <Stats>
                          {["Max Profit:", "Max Loss:", "Projected:"].map((l, i) => (
                            <React.Fragment key={l}>
                              <dt>{l}</dt>
                              <Tone $tone={signTone(g.stats[i])}>{g.stats[i]}</Tone>
                            </React.Fragment>
                          ))}
                        </Stats>
                      </Payoff>
                    </GroupSide>
                  </GroupHead>
                  <Chips>
                    {marketChips.map(([l, w], i) => (
                      <Chip key={l} $w={w}>{l}<ChipValue>{g.market[i]}</ChipValue></Chip>
                    ))}
                  </Chips>
                  <Chips>
                    {legChips.map(([l, w], i) => (
                      <Chip key={l} $w={w} $gap={i === 2}>{l}<ChipValue $center $tone={signTone(g.legs[i])}>{g.legs[i]}</ChipValue></Chip>
                    ))}
                  </Chips>
                </Group>
              </GroupCell>
            </tr>
            {g.rows.map(([name, qty, avg, ltp, pl, chg]) => {
              const open = qty !== "0";
              const tone = open ? undefined : c.dim;
              return (
                <tr key={name}>
                  <IconTd>{open && <Check type="checkbox" aria-label={`Select ${name}`} />}</IconTd>
                  <IconTd><button aria-label={`Adjust ${name}`}><EditIcon /></button></IconTd>
                  <IconTd><button aria-label={`Add ${name}`}><MdAdd size={30} color="#3f8a32" /></button></IconTd>
                  <Td $pad={22}><Badge $tone={open ? "NRML" : "OFF"}>NRML</Badge></Td>
                  <Td $pad={22} $tone={tone}>{ord(name)}<Exchange>NFO</Exchange></Td>
                  <Td $right $tone={open ? "#e04343" : c.dim}>{qty}</Td>
                  <Td $right $tone={tone}>{avg}</Td>
                  <Td $right $tone={tone}>{ltp}</Td>
                  <Td $right $hl={open} $tone={open ? "#43924a" : c.dim}>{pl}</Td>
                  <PctTd $right $tone={open ? "#e04343" : c.dim}>{chg}</PctTd>
                </tr>
              );
            })}
          </tbody>
        ))}
        <tfoot><tr><GroupCell colSpan={10} /></tr></tfoot>
      </Table>
    </Center>
  );
}

function Orders() {
  return (
    <RightPanel>
      <OrdersTitle $first>Open Orders (1)</OrdersTitle>
      <Collapse aria-label="Collapse orders" />
      <OrderTable>
        <colgroup>
          <col style={{ width: 99 }} />
          <col style={{ width: 77 }} />
          <col />
          <col style={{ width: 64 }} />
          <col style={{ width: 76 }} />
          <col style={{ width: 54 }} />
          <col style={{ width: 64 }} />
          <col style={{ width: 84 }} />
          <col style={{ width: 32 }} />
        </colgroup>
        <thead>
          <tr>
            <OTh $pad={6}>Time</OTh><OTh /><OTh>Instrument</OTh><OTh />
            <OTh $right>Qty.</OTh><OTh $right>LTP</OTh><OTh $right>Price</OTh><OTh $right>Status</OTh><OTh />
          </tr>
        </thead>
        <tbody>
          <tr>
            <OTd $pad={6}>11:59:13</OTd>
            <OTd><Badge $tone="SELL">SELL</Badge></OTd>
            <OTd>{ord("NIFTY 3rd FEB 26100 CE")}</OTd>
            <OTd><Badge $tone="NRML">NRML</Badge></OTd>
            <OTd $right>0 / 65</OTd>
            <OTd $right>9.00</OTd>
            <OTd $right>80.00</OTd>
            <OTd $right><Badge $tone="OPEN">OPEN</Badge></OTd>
            <OTd><Cancel aria-label="Cancel order"><Round glyph="x" size={24} /></Cancel></OTd>
          </tr>
        </tbody>
      </OrderTable>
      <OrdersTitle>Executed Orders (7)</OrdersTitle>
      <OrderTable>
        <colgroup>
          <col style={{ width: 98 }} />
          <col style={{ width: 74 }} />
          <col />
          <col style={{ width: 64 }} />
          <col style={{ width: 107 }} />
          <col style={{ width: 75 }} />
          <col style={{ width: 119 }} />
          <col style={{ width: 7 }} />
        </colgroup>
        <thead>
          <tr>
            <OTh $pad={6}>Time</OTh><OTh /><OTh>Instrument</OTh><OTh />
            <OTh $right>Qty.</OTh><OTh $right>Avg.</OTh><OTh $right>Status</OTh><OTh />
          </tr>
        </thead>
        <tbody>
          {executed.map(([time, side, name, qty, avg], i) => (
            <tr key={i}>
              <OTd $pad={6}>{time}</OTd>
              <OTd><Badge $tone={side}>{side}</Badge></OTd>
              <OTd>{ord(name)}</OTd>
              <OTd><Badge $tone="NRML">NRML</Badge></OTd>
              <OTd $right>{qty}</OTd>
              <OTd $right>{avg}</OTd>
              <OTd $right><Badge $tone="COMPLETE">COMPLETE</Badge></OTd>
              <OTd />
            </tr>
          ))}
        </tbody>
      </OrderTable>
    </RightPanel>
  );
}

function Watchlist() {
  return (
    <LeftPanel>
      <Watch>
        <WatchList rows={puts} />
        <Track><TrackArrow /><Thumb $before={252} $size={1} /></Track>
      </Watch>
      <Info>
        <InfoSearch>
          <svg width="20" height="20" viewBox="0 0 20 20" fill="none" stroke="#6a6e6e" strokeWidth="2.400">
            <circle cx="8" cy="8" r="6.500" />
            <path d="m13 13 6 6" />
          </svg>
          <Symbol aria-label="Symbol" defaultValue="NIFTY" />
          <Spot>25840.00</Spot>
          <SpotChange>751.60</SpotChange>
        </InfoSearch>
        <InfoExpiry>
          Expiry
          <Expiry defaultValue="3 FEB"><option>3 FEB</option></Expiry>
        </InfoExpiry>
        <InfoGrid>
          <span>Synthetic FUT</span><span><b>25834.20</b></span>
          <span>Straddle Price</span><span><b>141.00</b>125.20</span>
          <span>ATM Strike</span><span><b>25850</b></span>
          <span>CE Price</span><span><b>62.60</b>62.60</span>
          <span>ATM IV</span><span><b>34.04</b></span>
          <span>PE Price</span><span><b>78.40</b>62.60</span>
        </InfoGrid>
        <Steppers>
          <StepperField label="Total Strikes" value="50" />
          <StepperField label="ITM Strikes" value="-6" />
        </Steppers>
        <InfoToggle aria-label="Collapse info"><Round glyph="up" size={24} /></InfoToggle>
      </Info>
      <Watch>
        <WatchList rows={calls} call />
        <Track><TrackArrow /><Thumb $before={8} $size={124} /><TrackRest $size={247} /><TrackArrow $down /></Track>
      </Watch>
      <Pages>
        <PageTab $on>1</PageTab>
        <PageTab>2</PageTab>
      </Pages>
    </LeftPanel>
  );
}

function Annotations() {
  return (
    <>
      <Arrows fill="#f1f1f1" stroke="#f1f1f1">
        <path d="M893 345 891 378" strokeWidth="5" />
        <path d="M882 376h19l-10 13z" stroke="none" />
        <path d="M342 695 340 746" strokeWidth="9" />
        <path d="M323 743l35 1-18 18z" stroke="none" />
        <path d="M1480 525 1478 560" strokeWidth="5" />
        <path d="M1469 557l19 1-9 12z" stroke="none" />
        <path d="M664 940 662 996" strokeWidth="6" />
        <path d="M652 992l21 1-12 17z" stroke="none" />
        <path d="M719 1008 712 1024" strokeWidth="5" />
        <path d="M707 1018l14 8-13 8z" stroke="none" />
      </Arrows>
      <Callout $x={814} $y={310} $w={191} $h={37} $size={17} $r={18}>MTM Chart</Callout>
      <Callout $x={190} $y={648} $w={406} $h={49} $size={22} $r={18}>Straddle Price and IV Info Section</Callout>
      <Callout $x={1401} $y={490} $w={191} $h={37} $size={17} $r={18}>Payoff Graph Toggle</Callout>
      <Callout $x={596} $y={906} $w={335} $h={36} $size={18} $r={18}>Quickly adjust position using basket</Callout>
      <Callout $x={693} $y={978} $w={207} $h={32} $size={16} $r={16}>Add quantities shortcut</Callout>
    </>
  );
}

export default function App() {
  return (
    <Desktop>
      <Global />
      <Window>
        <Chrome />
        <Ticker>
          <TickerStart><CloseAll aria-label="Exit all"><Round glyph="x" size={34} fill="#ff0038" ink="#0a0306" /></CloseAll></TickerStart>
          <Indices>
            {indices.map(([name, price, chg, pct]) => (
              <Index key={name}>
                <IndexName>{name}</IndexName>
                <IndexFigures><IndexPrice>{price}</IndexPrice><span>{chg}</span><span>{pct}</span></IndexFigures>
              </Index>
            ))}
          </Indices>
          <TickerEnd><ApiButton>Neo API Running<Round glyph="check" size={23} fill="#fff" ink="#0b8050" /></ApiButton></TickerEnd>
        </Ticker>
        <Body>
          <Watchlist />
          <Panel>
            <Positions />
            <CenterTrack><TrackArrow /><Thumb $before={9} $size={1058} /><TrackRest $size={38} /></CenterTrack>
          </Panel>
          <Orders />
        </Body>
        <Footer>
          {footer.map(([label, value, tone]) => (
            <span key={label}>{label}: <Total $tone={tone}>{value}</Total></span>
          ))}
          <FooterIcons>
            <BasketIcon />
            <MdSettings size={26} />
          </FooterIcons>
          <Dome aria-label="Close panel">
            <svg width="18" height="18" viewBox="0 0 18 18" stroke="#ff0038" strokeWidth="3"><path d="m1 1 16 16M17 1 1 17" /></svg>
          </Dome>
        </Footer>
      </Window>
      <Annotations />
    </Desktop>
  );
}
